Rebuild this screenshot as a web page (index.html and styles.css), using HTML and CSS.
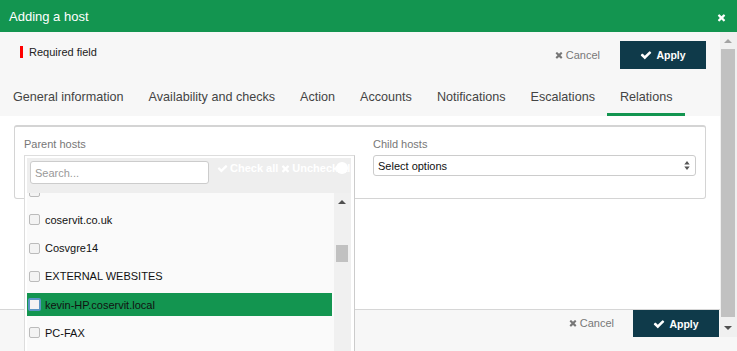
FILE: index.html
```html
<!DOCTYPE html>
<html lang="en">
<head>
    <meta charset="UTF-8">
    <meta name="viewport" content="width=device-width, initial-scale=1.0">
    <title>Adding a host</title>
    <link rel="stylesheet" href="styles.css">
</head>
<body>
    <div class="modal">
        <header class="modal-head">
            <h1>Adding a host</h1>
            <span class="close">
                <svg viewBox="0 0 1408 1792" width="9" height="11"><path d="M1298 1322q0 40-28 68l-136 136q-28 28-68 28t-68-28l-294-294-294 294q-28 28-68 28t-68-28l-136-136q-28-28-28-68t28-68l294-294-294-294q-28-28-28-68t28-68l136-136q28-28 68-28t68 28l294 294 294-294q28-28 68-28t68 28l136 136q28 28 28 68t-28 68l-294 294 294 294q28 28 28 68z"/></svg>
            </span>
        </header>

        <div class="modal-main">
            <div class="modal-content">
                <div class="toolbar">
                    <span class="required">Required field</span>
                    <div class="actions">
                        <button class="btn-cancel">
                            <svg viewBox="0 0 1408 1792" width="8" height="10"><path d="M1298 1322q0 40-28 68l-136 136q-28 28-68 28t-68-28l-294-294-294 294q-28 28-68 28t-68-28l-136-136q-28-28-28-68t28-68l294-294-294-294q-28-28-28-68t28-68l136-136q28-28 68-28t68 28l294 294 294-294q28-28 68-28t68 28l136 136q28 28 28 68t-28 68l-294 294 294 294q28 28 28 68z"/></svg>
                            Cancel
                        </button>
                        <button class="btn-apply">
                            <svg viewBox="0 0 1792 1792" width="12" height="12"><path d="M1671 566q0 40-28 68l-724 724-136 136q-28 28-68 28t-68-28l-136-136-362-362q-28-28-28-68t28-68l136-136q28-28 68-28t68 28l294 295 656-657q28-28 68-28t68 28l136 136q28 28 28 68z"/></svg>
                            Apply
                        </button>
                    </div>
                </div>

                <nav class="tabs">
                    <span class="tab">General information</span>
                    <span class="tab">Availability and checks</span>
                    <span class="tab">Action</span>
                    <span class="tab">Accounts</span>
                    <span class="tab">Notifications</span>
                    <span class="tab">Escalations</span>
                    <span class="tab active">Relations</span>
                </nav>

                <div class="pane">
                    <div class="panel">
                        <div class="field parent-field">
                            <label>Parent hosts</label>
                            <div class="ms-drop">
                                <div class="ms-head">
                                    <input type="text" class="ms-search" placeholder="Search...">
                                    <span class="ms-links">
                                        <svg viewBox="0 0 1792 1792" width="11" height="11"><path d="M1671 566q0 40-28 68l-724 724-136 136q-28 28-68 28t-68-28l-136-136-362-362q-28-28-28-68t28-68l136-136q28-28 68-28t68 28l294 295 656-657q28-28 68-28t68 28l136 136q28 28 28 68z"/></svg>
                                        Check all
                                        <svg viewBox="0 0 1408 1792" width="9" height="11"><path d="M1298 1322q0 40-28 68l-136 136q-28 28-68 28t-68-28l-294-294-294 294q-28 28-68 28t-68-28l-136-136q-28-28-28-68t28-68l294-294-294-294q-28-28-28-68t28-68l136-136q28-28 68-28t68 28l294 294 294-294q28-28 68-28t68 28l136 136q28 28 28 68t-28 68l-294 294 294 294q28 28 28 68z"/></svg>
                                        Uncheck all
                                    </span>
                                    <span class="ms-badge"></span>
                                </div>
                                <div class="ms-body">
                                    <ul class="ms-list">
                                        <li class="ms-item"><span class="box"></span></li>
                                        <li class="ms-item"><span class="box"></span>coservit.co.uk</li>
                                        <li class="ms-item"><span class="box"></span>Cosvgre14</li>
                                        <li class="ms-item"><span class="box"></span>EXTERNAL WEBSITES</li>
                                        <li class="ms-item hover"><span class="box"></span>kevin-HP.coservit.local</li>
                                        <li class="ms-item"><span class="box"></span>PC-FAX</li>
                                    </ul>
                                    <div class="ms-scroll">
                                        <span class="arr up"></span>
                                        <span class="ms-thumb"></span>
                                        <span class="arr down"></span>
                                    </div>
                                </div>
                            </div>
                        </div>
                        <div class="field">
                            <label>Child hosts</label>
                            <div class="select">
                                Select options
                                <svg viewBox="0 0 6 10" width="6" height="9"><path d="M3 0 6 4H0zM3 10 0 6h6z"/></svg>
                            </div>
                        </div>
                    </div>
                </div>

                <div class="foot">
                    <button class="btn-cancel">
                        <svg viewBox="0 0 1408 1792" width="8" height="10"><path d="M1298 1322q0 40-28 68l-136 136q-28 28-68 28t-68-28l-294-294-294 294q-28 28-68 28t-68-28l-136-136q-28-28-28-68t28-68l294-294-294-294q-28-28-28-68t28-68l136-136q28-28 68-28t68 28l294 294 294-294q28-28 68-28t68 28l136 136q28 28 28 68t-28 68l-294 294 294 294q28 28 28 68z"/></svg>
                        Cancel
                    </button>
                    <button class="btn-apply">
                        <svg viewBox="0 0 1792 1792" width="12" height="12"><path d="M1671 566q0 40-28 68l-724 724-136 136q-28 28-68 28t-68-28l-136-136-362-362q-28-28-28-68t28-68l136-136q28-28 68-28t68 28l294 295 656-657q28-28 68-28t68 28l136 136q28 28 28 68z"/></svg>
                        Apply
                    </button>
                </div>
            </div>

            <div class="vscroll">
                <span class="arr up"></span>
                <span class="thumb"></span>
                <span class="arr down"></span>
            </div>
        </div>
    </div>
</body>
</html>
```

FILE: styles.css
```css
body {
    margin: 0;
    height: 351px;
    overflow: hidden;
    font-family: "Liberation Sans", Arial, sans-serif;
    background-color: #f7f7f7;
    color: #333;
}
.modal-head {
    height: 32px;
    background-color: #139550;
    color: white;
    display: flex;
    align-items: center;
    justify-content: space-between;
    padding: 0 11px 0 9px;
}
.modal-head h1 {
    margin: 0;
    font-size: 13px;
    font-weight: normal;
}
.close {
    display: flex;
    margin-top: 3px;
}
.close svg {
    fill: white;
}
.modal-main {
    display: flex;
    height: 305px;
}
.modal-content {
    flex: 1;
    display: flex;
    flex-direction: column;
}
.toolbar {
    height: 48px;
    display: flex;
    justify-content: space-between;
    padding: 9px 14px 0 20px;
    box-sizing: border-box;
}
.required {
    height: 12px;
    margin-top: 5px;
    border-left: 3px solid #f00;
    padding-left: 6px;
    font-size: 11px;
    line-height: 12px;
    color: #222;
}
.actions {
    display: flex;
    align-items: flex-start;
}
button {
    font-family: inherit;
    border: none;
    cursor: pointer;
    display: flex;
    align-items: center;
    justify-content: center;
    gap: 3px;
}
.btn-cancel {
    background: none;
    color: #777;
    font-size: 11px;
    padding: 0;
    height: 28px;
    margin-right: 20px;
}
.btn-cancel svg {
    fill: #777;
}
.btn-apply {
    background-color: #0f3a4a;
    color: white;
    font-size: 10.5px;
    font-weight: bold;
    width: 86px;
    height: 28px;
    gap: 4px;
}
.btn-apply svg {
    fill: white;
}
.tabs {
    display: flex;
    height: 36px;
    padding-left: 0.5px;
}
.tab {
    padding: 7px 12.5px 0;
    font-size: 12.6px;
    line-height: 20px;
    white-space: nowrap;
    color: #444;
    box-sizing: border-box;
}
.tab.active {
    border-bottom: 3px solid #139550;
}
.pane {
    flex: 1;
    background-color: white;
    padding: 9px 14px 0;
}
.panel {
    border: 1px solid #d4d4d4;
    border-top-width: 2px;
    border-radius: 3px;
    padding: 10px 9px 22px;
    display: grid;
    grid-template-columns: 1fr 1fr;
    column-gap: 26px;
}
.field label {
    display: block;
    font-size: 11px;
    line-height: 14px;
    color: #777;
    margin-bottom: 4px;
}
.parent-field {
    position: relative;
    height: 21px;
}
.parent-field label {
    height: 14px;
}
.select {
    height: 21px;
    box-sizing: border-box;
    border: 1px solid #ccc;
    border-radius: 3px;
    background-color: white;
    font-size: 11px;
    color: #111;
    display: flex;
    align-items: center;
    justify-content: space-between;
    padding: 0 5px 0 4px;
}
.select svg {
    fill: #555;
}
.ms-drop {
    position: absolute;
    left: 0;
    top: 18px;
    width: 331px;
    height: 220px;
    box-sizing: border-box;
    border: 1px solid #ddd;
    border-right-color: #ccc;
    background-color: white;
    padding: 2px 3px 0 2px;
    z-index: 2;
}
.ms-head {
    position: relative;
    height: 35px;
    background-color: #eee;
    display: flex;
    align-items: flex-start;
    padding: 3px;
    box-sizing: border-box;
    gap: 7px;
    overflow: hidden;
}
.ms-search {
    width: 179px;
    height: 23px;
    box-sizing: border-box;
    border: 1px solid #ccc;
    border-radius: 3px;
    padding: 0 4px;
    font-family: inherit;
    font-size: 11px;
    flex-shrink: 0;
}
.ms-search::placeholder {
    color: #999;
}
.ms-links {
    color: white;
    font-size: 11px;
    font-weight: bold;
    white-space: nowrap;
    padding-top: 1px;
    display: flex;
    align-items: center;
    gap: 2px;
}
.ms-links svg {
    fill: white;
    margin-left: 1px;
}
.ms-badge {
    position: absolute;
    left: 309px;
    top: 4px;
    width: 12px;
    height: 12px;
    border-radius: 50%;
    background-color: white;
}
.ms-body {
    display: flex;
    height: 180px;
    background-color: #fafafa;
    overflow: hidden;
}
.ms-list {
    flex: 1;
    list-style: none;
    margin: 0;
    padding: 0 2px 0 0;
}
.ms-item {
    display: flex;
    align-items: center;
    height: 23px;
    margin-bottom: 5.3px;
    font-size: 11px;
    color: #111;
}
.ms-item:first-child {
    margin-top: -13px;
}
.ms-item.hover {
    background-color: #139550;
    color: #111;
}
.box {
    width: 11px;
    height: 11px;
    box-sizing: border-box;
    border: 1px solid #bbb;
    border-radius: 2px;
    background-color: #f3f3f3;
    margin: 0 5px 0 2px;
}
.ms-item.hover .box {
    border: 2px solid #5a95c4;
    width: 13px;
    height: 13px;
    margin: 0 4px 0 1px;
}
.ms-scroll {
    width: 17px;
    background-color: #f0f0f0;
    position: relative;
}
.vscroll {
    width: 17px;
    background-color: #f0f0f0;
    position: relative;
}
.arr {
    position: absolute;
    left: 4px;
    width: 0;
    height: 0;
    border-left: 4px solid transparent;
    border-right: 4px solid transparent;
}
.arr.up {
    top: 7px;
    border-bottom: 4px solid #505050;
}
.arr.down {
    bottom: 7px;
    border-top: 4px solid #505050;
}
.vscroll .arr.up {
    border-bottom-color: #a3a3a3;
}
.thumb {
    position: absolute;
    left: 1px;
    right: 2px;
    top: 17px;
    bottom: 20px;
    background-color: #c1c1c1;
}
.ms-thumb {
    position: absolute;
    left: 2px;
    right: 3px;
    top: 52px;
    height: 17px;
    background-color: #c1c1c1;
}
.foot {
    height: 28px;
    box-sizing: border-box;
    border-top: 1px solid #d6d6d6;
    display: flex;
    justify-content: flex-end;
    align-items: flex-start;
}
.foot .btn-cancel {
    height: 26px;
    margin-right: 19px;
}
.foot .btn-apply {
    height: 27px;
    width: 86px;
    margin-right: 1px;
}
```
